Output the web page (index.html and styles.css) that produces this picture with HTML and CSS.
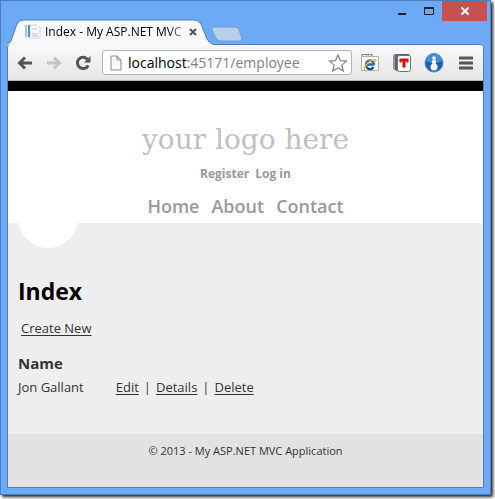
FILE: index.html
```html
<!DOCTYPE html>
<html lang="en">
<head>
<meta charset="utf-8">
<title>Index - My ASP.NET MVC Application</title>
<link rel="stylesheet" href="styles.css">
</head>
<body>
<div class="window">
  <div class="titlebar">
    <div class="tab">
      <svg class="tab-shape" viewBox="0 0 206 26" preserveAspectRatio="none" aria-hidden="true"><path d="M0 25C4 24 4 22 5 19L10 5Q12 1 16 1H187Q192 1 194 5L200 20Q202 24 206 25V26H0Z" fill="#f9f9f9"/><path d="M0 25C4 24 4 22 5 19L10 5Q12 1 16 1H187Q192 1 194 5L200 20Q202 24 206 25" fill="none" stroke="#4d7eb8"/></svg>
      <svg class="favicon" viewBox="0 0 16 16" aria-hidden="true"><path d="M0 0h12l4 4v11H0z" fill="#edf0f4"/><path d="M5 1h7l3 3v10H5z" fill="#f8f9fb" stroke="#d3dae4"/><path d="M0 1h2v12H0z" fill="#8ed0ec"/><path d="M3 1h2v12H3z" fill="#5d93b9"/><path d="M7 5h5M7 10h6M7 12h6" stroke="#b7c4d6"/></svg>
      <span class="tab-title">Index - My ASP.NET MVC</span>
      <button class="tab-close" aria-label="Close tab"><svg viewBox="0 0 8 8"><path d="M1 1l6 6M7 1L1 7" stroke="#555" stroke-width="2"/></svg></button>
    </div>
    <button class="new-tab" aria-label="New tab"><svg viewBox="0 0 32 16"><path d="M3 1H24Q27 1 28 4L31 12Q31 15 28 15H10Q6 15 5 12L1 4Q0 1 3 1Z" fill="#b9cfe9" stroke="#6d9dd3"/></svg></button>
    <div class="controls">
      <button aria-label="Minimize"><svg viewBox="0 0 12 10"><path d="M2 8h8" stroke="#222" stroke-width="2"/></svg></button>
      <button aria-label="Maximize"><svg viewBox="0 0 12 10"><path d="M1.5 1.5h9v7h-9z" fill="none" stroke="#222"/><path d="M1 2h10" stroke="#222" stroke-width="2"/></svg></button>
      <button class="close" aria-label="Close"><svg viewBox="0 0 12 10"><path d="M2.5 1.5l7 7M9.5 1.5l-7 7" stroke="#fff" stroke-width="2"/></svg></button>
    </div>
  </div>
  <div class="frame">
    <div class="toolbar">
      <button class="tool" aria-label="Back"><svg viewBox="0 0 16 14"><path d="M15 7H3M8 1.5L2.5 7L8 12.5" fill="none" stroke="#555" stroke-width="3"/></svg></button>
      <button class="tool forward" aria-label="Forward"><svg viewBox="0 0 16 14"><path d="M1 7H13M8 1.5L13.5 7L8 12.5" fill="none" stroke="#c4c4c4" stroke-width="3"/></svg></button>
      <button class="tool reload" aria-label="Reload"><svg viewBox="0 0 16 16"><path d="M12.5 4.2A5.7 5.7 0 1 0 13.2 10.5" fill="none" stroke="#555" stroke-width="3"/><path d="M15.5 1v6.500H9z" fill="#555"/></svg></button>
      <div class="omnibox">
        <svg class="page-icon" viewBox="0 0 12 16" aria-hidden="true"><path d="M1 1h6l4 4v10H1z" fill="#f8f8f8" stroke="#888"/><path d="M7 1v4h4" fill="none" stroke="#888"/></svg>
        <div class="url" role="textbox" aria-label="Address" contenteditable="true" spellcheck="false"><span class="host">localhost</span>:45171/employee</div>
        <button class="star" aria-label="Bookmark"><svg viewBox="0 0 20 20"><path d="M10 2l2.400 5.600 6.100.5-4.600 4 1.400 6L10 14.900 4.700 18.100l1.400-6-4.600-4 6.100-.5z" fill="#fff" stroke="#858585" stroke-width="1.2"/></svg></button>
      </div>
      <button class="ext" aria-label="IE Tab"><svg viewBox="0 0 20 20"><path d="M1.5 3.5h17v14h-17z" fill="#fafafa" stroke="#b0b0b0"/><path d="M2 3V1.500h5V3M8 3V1.500h4V3" stroke="#666" stroke-dasharray="3 1" fill="none"/><path d="M14.500 11.500H7M14 11.500A4 4.300 0 1 0 13.500 14" fill="none" stroke="#1470c4" stroke-width="2.5"/><path d="M5 17C3 15 8 7 15 6.500Q17 7 14.500 9" fill="none" stroke="#edb61f" stroke-width="1.5"/><path d="M8 15.500q3 1.800 5-1" stroke="#123f86" fill="none" stroke-width="1.5"/></svg></button>
      <button class="ext" aria-label="T extension"><svg viewBox="0 0 20 20"><rect x="1" y="1" width="15" height="16" rx="2" fill="#9199a1"/><rect x="3" y="1" width="15" height="17" rx="2" fill="#5c6670"/><rect x="5.500" y="2.500" width="13" height="16" rx="2" fill="#fff" stroke="#66717b"/><path d="M7.500 5.500h9v4h-2v-1h-1v6h-3v-6h-1v1h-2z" fill="#e00b0b"/></svg></button>
      <button class="ext" aria-label="Info extension"><svg viewBox="0 0 20 20"><circle cx="10" cy="10" r="9" fill="#1862ad" stroke="#4b8fce"/><path d="M2 8a8 8 0 0 1 16 0Q10 12 2 8" fill="#468fd0"/><circle cx="10" cy="5" r="1.800" fill="#fff"/><circle cx="10" cy="9" r="2.200" fill="#fff"/><circle cx="10" cy="14" r="3.500" fill="#fff"/></svg></button>
      <button class="menu" aria-label="Menu"><svg viewBox="0 0 14 14"><path d="M1 2h12M1 7h12M1 12h12" stroke="#555" stroke-width="3" stroke-linecap="round"/></svg></button>
    </div>
    <div class="page">
      <header>
        <a class="logo" href="#">your logo here</a>
        <div class="login"><a href="#">Register</a><a href="#">Log in</a></div>
        <nav><a href="#">Home</a><a href="#">About</a><a href="#">Contact</a></nav>
      </header>
      <main>
        <h1>Index</h1>
        <p><a href="#">Create New</a></p>
        <table>
          <thead><tr><th scope="col">Name</th><td></td></tr></thead>
          <tbody><tr><td>Jon Gallant</td><td class="actions"><a href="#">Edit</a><span>|</span><a href="#">Details</a><span>|</span><a href="#">Delete</a></td></tr></tbody>
        </table>
      </main>
      <footer>© 2013 - My ASP.NET MVC Application</footer>
    </div>
  </div>
</div>
</body>
</html>
```
FILE: styles.css
```css
* { box-sizing: border-box; }
body {
  margin: 0;
  min-height: 100vh;
  padding: 0 4px 4px 0;
  display: flex;
  background: #fff;
  font-family: "Open Sans", "Noto Sans", sans-serif;
  font-size: 13px;
  color: #333;
}
button {
  border: 0;
  padding: 0;
  background: none;
  display: flex;
  align-items: center;
  justify-content: center;
  flex: none;
}
svg { display: block; flex: none; }
.window {
  flex: 1;
  min-width: 0;
  display: flex;
  flex-direction: column;
  padding: 0 6px 6px;
  border: 1px solid #4b7ebd;
  background: #6caaf5;
  box-shadow: 2px 2px 3px #222;
}
.titlebar { display: flex; height: 43px; }
.tab {
  position: relative;
  display: flex;
  align-items: center;
  width: 206px;
  height: 26px;
  margin-top: 18px;
  padding: 0 12px 0 18px;
  z-index: 1;
}
.tab-shape { position: absolute; inset: 0; width: 100%; height: 100%; }
.favicon { position: relative; width: 16px; height: 16px; }
.tab-title {
  position: relative;
  flex: 1;
  margin-left: 4px;
  font-size: 12px;
  line-height: 20px;
  white-space: nowrap;
  background: linear-gradient(90deg, #000 88%, #999 98%);
  background-clip: text;
  color: transparent;
}
.tab-close { position: relative; width: 16px; height: 16px; }
.tab-close svg { width: 8px; height: 8px; }
.new-tab { width: 32px; height: 16px; margin: 25px 0 0 -2px; }
.new-tab svg { width: 32px; height: 16px; }
.controls { display: flex; margin-left: auto; margin-right: -3px; }
.controls button { width: 27px; height: 20px; }
.controls svg { width: 12px; height: 10px; }
.controls .close { width: 45px; background: #c75050; }
.frame {
  flex: 1;
  display: flex;
  flex-direction: column;
  border: 1px solid #4b7ebd;
  border-radius: 4px 4px 0 0;
  background: #fff;
  overflow: hidden;
}
.toolbar {
  display: flex;
  align-items: center;
  height: 36px;
  padding: 0 10px 0 9px;
  background: linear-gradient(#f9f9f9, #e5e5e5);
  border-bottom: 1px solid #b8b8b8;
}
.tool svg { width: 16px; height: 14px; }
.forward { margin-left: 13px; }
.reload { margin-left: 13px; }
.reload svg { height: 16px; }
.omnibox {
  flex: 1;
  min-width: 0;
  display: flex;
  align-items: center;
  height: 25px;
  margin-left: 11px;
  padding: 0 3px 0 7px;
  border: 1px solid #b5b5b5;
  border-radius: 3px;
  background: #fff;
}
.page-icon { width: 12px; height: 16px; }
.url {
  flex: 1;
  margin-left: 6px;
  font-size: 14px;
  line-height: 22px;
  white-space: nowrap;
  overflow: hidden;
  color: #808080;
}
.host { color: #000; }
.star svg, .ext svg { width: 20px; height: 20px; }
.ext { margin-left: 12px; }
.omnibox + .ext { margin-left: 8px; }
.menu { margin-left: 15px; }
.menu svg { width: 14px; height: 14px; }
.page {
  flex: 1;
  display: flex;
  flex-direction: column;
  border-top: 10px solid #000;
}
header {
  display: flex;
  flex-direction: column;
  align-items: center;
  padding-top: 30px;
  height: 132px;
}
header a { color: #999; font-weight: 600; text-decoration: none; }
header .logo {
  font: 28px/38px "DejaVu Serif", serif;
  color: #c0c0c0;
}
.login { display: flex; gap: 6px; margin-top: 5px; font-size: 12px; line-height: 20px; }
.login a { font-weight: 700; }
nav { display: flex; gap: 12px; margin-top: 8px; font-size: 18px; line-height: 28px; }
main {
  position: relative;
  flex: 1;
  padding: 50px 10px 20px;
  background: #eee;
  overflow: hidden;
}
main::before {
  content: "";
  position: absolute;
  left: 10px;
  top: -35px;
  width: 60px;
  height: 60px;
  border-radius: 50%;
  background: #fff;
}
main a { color: #333; text-underline-offset: 2px; }
h1 { margin: 0; font-size: 23px; line-height: 36px; color: #000; }
p { margin: 9px 3px 0; line-height: 20px; }
table { margin-top: 13px; border-collapse: collapse; line-height: 24px; }
th, td { padding: 0; text-align: left; }
th { font-size: 15px; }
.actions { padding-left: 32px; }
.actions span { margin: 0 5px; }
footer {
  height: 53px;
  padding-top: 8px;
  background: #e2e2e2;
  text-align: center;
  font-size: 11px;
  line-height: 18px;
}
```
